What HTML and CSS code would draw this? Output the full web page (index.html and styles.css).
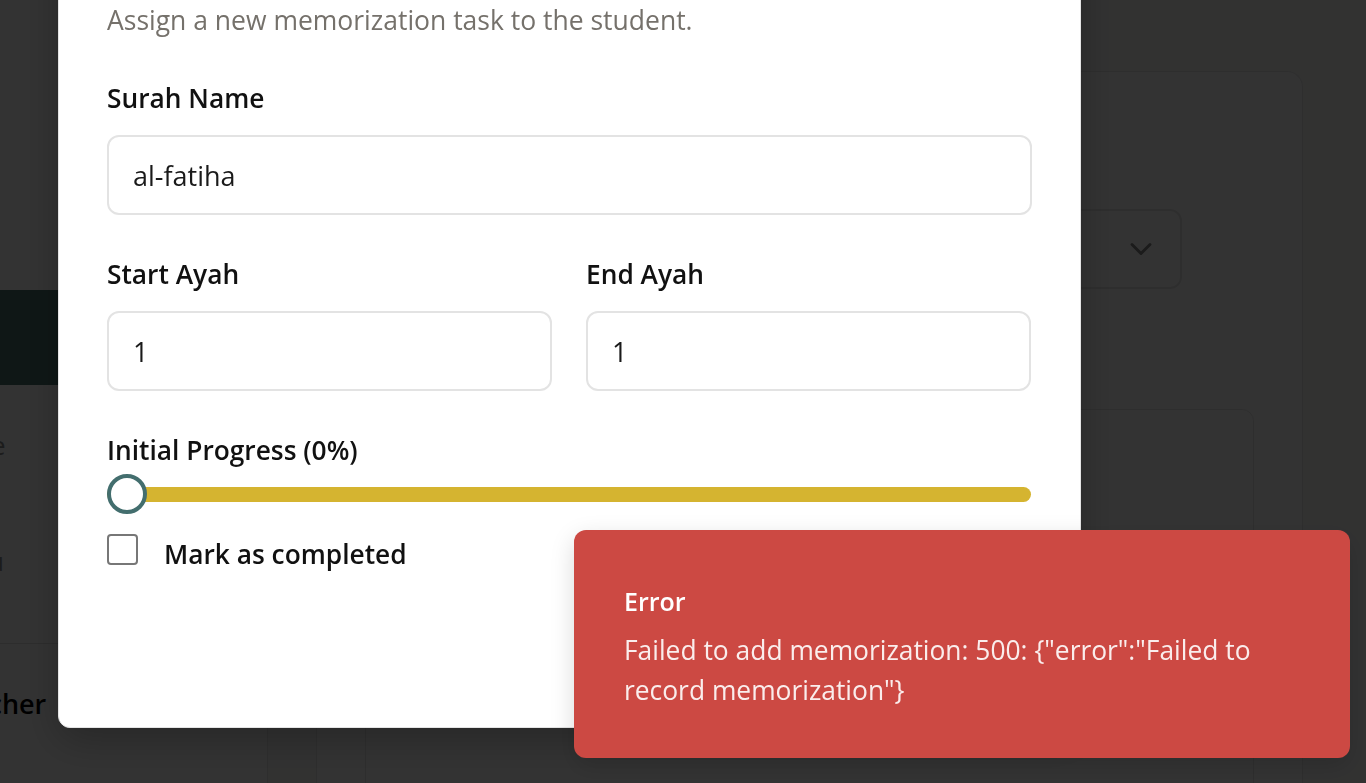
FILE: index.html
```html
<!DOCTYPE html>
<html lang="en">
<head>
<meta charset="utf-8">
<title>Add Memorization</title>
<link rel="stylesheet" href="styles.css">
</head>
<body>
<div class="app">
  <aside class="sidebar">
    <div class="sidebar-top"></div>
    <div class="nav-item active"><span class="nav-text t0">Students</span></div>
    <div class="nav-item"><span class="nav-text t1">Home</span></div>
    <div class="nav-item"><span class="nav-text t2">Menu</span></div>
    <div class="sidebar-foot"><span class="user">Teacher</span><span class="user-role">Settings</span></div>
  </aside>
  <main class="main">
    <section class="panel">
      <div class="panel-head">
        <h2 class="panel-title">Student Details</h2>
        <p class="panel-desc">Select a student to view progress</p>
      </div>
      <div class="select">
        <span class="select-value">Choose a student</span>
        <svg class="chevron" viewBox="0 0 24 24" width="36" height="36" fill="none" stroke="currentColor" stroke-width="2" stroke-linecap="round" stroke-linejoin="round"><path d="m6 9 6 6 6-6"/></svg>
      </div>
      <div class="card"></div>
    </section>
  </main>
</div>

<div class="overlay"></div>

<div class="dialog" role="dialog">
  <div class="dialog-header">
    <h2 class="dialog-title">Add Memorization</h2>
    <p class="dialog-desc">Assign a new memorization task to the student.</p>
  </div>
  <form class="form">
    <div class="field">
      <label class="label">Surah Name</label>
      <div class="input">al-fatiha</div>
    </div>
    <div class="row">
      <div class="field">
        <label class="label">Start Ayah</label>
        <div class="input">1</div>
      </div>
      <div class="field">
        <label class="label">End Ayah</label>
        <div class="input">1</div>
      </div>
    </div>
    <div class="field field-slider">
      <label class="label">Initial Progress (0%)</label>
      <div class="slider">
        <div class="track"></div>
        <div class="thumb"></div>
      </div>
    </div>
    <div class="check-row">
      <span class="checkbox"></span>
      <span class="check-label">Mark as completed</span>
    </div>
    <div class="footer">
      <button type="button" class="btn btn-outline">Cancel</button>
      <button type="button" class="btn btn-primary">Add</button>
    </div>
  </form>
</div>

<div class="toast" role="alert">
  <div class="toast-title">Error</div>
  <div class="toast-body">Failed to add memorization: 500: {"error":"Failed to record memorization"}</div>
</div>
</body>
</html>
```

FILE: styles.css
```css
* { box-sizing: border-box; }

html, body {
  margin: 0;
  padding: 0;
}

body {
  width: 1366px;
  height: 783px;
  overflow: hidden;
  position: relative;
  font-family: "Open Sans", "Noto Sans", sans-serif;
  background: #f7f7f6;
  color: #111;
}

/* ---------- underlying page ---------- */
.app {
  display: flex;
  height: 783px;
}

.sidebar {
  flex: none;
  width: 268px;
  background: #ffffff;
  border-right: 1px solid #e6e6e6;
  display: flex;
  flex-direction: column;
  overflow: hidden;
}

.sidebar-top { height: 290px; }

.nav-item {
  height: 117px;
  display: flex;
  align-items: center;
  font-size: 26px;
  color: #8a8a8a;
  white-space: nowrap;
}

.nav-item.active {
  height: 95px;
  background: #4b736e;
  color: #fff;
}

.nav-text.t0 { margin-left: 70px; }
.nav-text.t1 { margin-top: 2px; margin-left: -68px; }
.nav-text.t2 { margin-left: -66px; }

.sidebar-foot {
  height: 140px;
  border-top: 1px solid #e0e0e0;
  margin-top: 24px;
  display: flex;
  align-items: center;
  gap: 40px;
  white-space: nowrap;
  padding-bottom: 20px;
}

.user {
  margin-left: -58px;
  font-size: 27px;
  font-weight: 600;
  color: #000;
}

.user-role {
  font-size: 26px;
  color: #222;
}

.main {
  flex: 1;
  display: flex;
  padding: 71px 63px 0 48px;
}

.panel {
  flex: 1;
  border: 1.5px solid #e6e6e6;
  border-bottom: none;
  border-radius: 16px 16px 0 0;
  padding: 48px 48px 0;
  background: #fff;
}

.panel-head { height: 89px; }

.panel-title {
  margin: 0;
  font-size: 30px;
  font-weight: 600;
}

.panel-desc {
  margin: 6px 0 0;
  font-size: 22px;
  color: #777;
}

.select {
  margin-right: 72px;
  height: 80px;
  border: 2px solid #e6e6e6;
  border-radius: 12px;
  display: flex;
  align-items: center;
  justify-content: space-between;
  padding: 0 21px 0 24px;
  font-size: 26px;
  color: #777;
}

.chevron { color: #888; }

.card {
  margin-top: 120px;
  height: 420px;
  border: 1.5px solid #e6e6e6;
  border-radius: 12px;
}

/* ---------- overlay ---------- */
.overlay {
  position: fixed;
  inset: 0;
  background: rgba(0, 0, 0, 0.8);
}

/* ---------- dialog ---------- */
.dialog {
  position: fixed;
  left: 58px;
  width: 1023px;
  top: -80px;
  bottom: 55px;
  background: #fff;
  border: 1px solid #e4e4e4;
  border-radius: 12px;
  padding: 48px 48px;
  box-shadow: 0 12px 40px rgba(0, 0, 0, 0.25);
}

.dialog-header {
  display: flex;
  flex-direction: column;
  gap: 9px;
}

.dialog-title {
  margin: 0;
  font-size: 30px;
  line-height: 27px;
  font-weight: 600;
}

.dialog-desc {
  margin: 0;
  font-size: 26.5px;
  line-height: 30px;
  color: #75716b;
}

.form {
  margin-top: 45px;
  display: flex;
  flex-direction: column;
  gap: 41px;
}

.field {
  display: flex;
  flex-direction: column;
  gap: 19px;
}

.row {
  display: grid;
  grid-template-columns: 445px 445px;
  gap: 34px;
}

.label {
  font-size: 26.3px;
  line-height: 36px;
  font-weight: 600;
  color: #111;
}

.input {
  height: 80px;
  border: 2px solid #e3e3e3;
  border-radius: 12px;
  display: flex;
  align-items: center;
  padding-left: 24px;
  font-size: 27px;
  color: #1a1a1a;
}

.field-slider { gap: 6px; }

.slider {
  position: relative;
  height: 40px;
  display: flex;
  align-items: center;
  margin-right: 1px;
}

.track {
  flex: 1;
  height: 15px;
  border-radius: 8px;
  background: #d5b430;
}

.thumb {
  position: absolute;
  left: 0;
  top: 0;
  width: 40px;
  height: 40px;
  border-radius: 50%;
  background: #fff;
  border: 4px solid #436e6e;
}

.check-row {
  margin-top: -26px;
  display: flex;
  align-items: flex-start;
  gap: 26px;
}

.checkbox {
  width: 31px;
  height: 31px;
  margin-top: 5px;
  border: 2px solid #777;
  border-radius: 4px;
  flex: none;
}

.check-label {
  font-size: 26.3px;
  line-height: 36px;
  font-weight: 600;
  padding-top: 7px;
  color: #111;
}

.footer {
  display: flex;
  justify-content: flex-end;
  gap: 16px;
  margin-top: -8px;
}

.btn {
  height: 60px;
  padding: 0 30px;
  border-radius: 10px;
  font-family: inherit;
  font-size: 24px;
  font-weight: 600;
}

.btn-outline {
  background: #fff;
  border: 2px solid #e3e3e3;
  color: #111;
}

.btn-primary {
  background: #436e6e;
  border: none;
  color: #fff;
}

/* ---------- toast ---------- */
.toast {
  position: fixed;
  left: 574px;
  top: 530px;
  width: 776px;
  height: 228px;
  background: #cc4943;
  border-radius: 12px;
  padding: 56px 50px 48px;
  color: #fff;
  box-shadow: 0 8px 24px rgba(0, 0, 0, 0.15);
}

.toast-title {
  font-size: 25px;
  line-height: 30px;
  font-weight: 600;
}

.toast-body {
  margin-top: 14px;
  font-size: 26.4px;
  line-height: 40px;
  color: rgba(255, 255, 255, 0.9);
}
```
